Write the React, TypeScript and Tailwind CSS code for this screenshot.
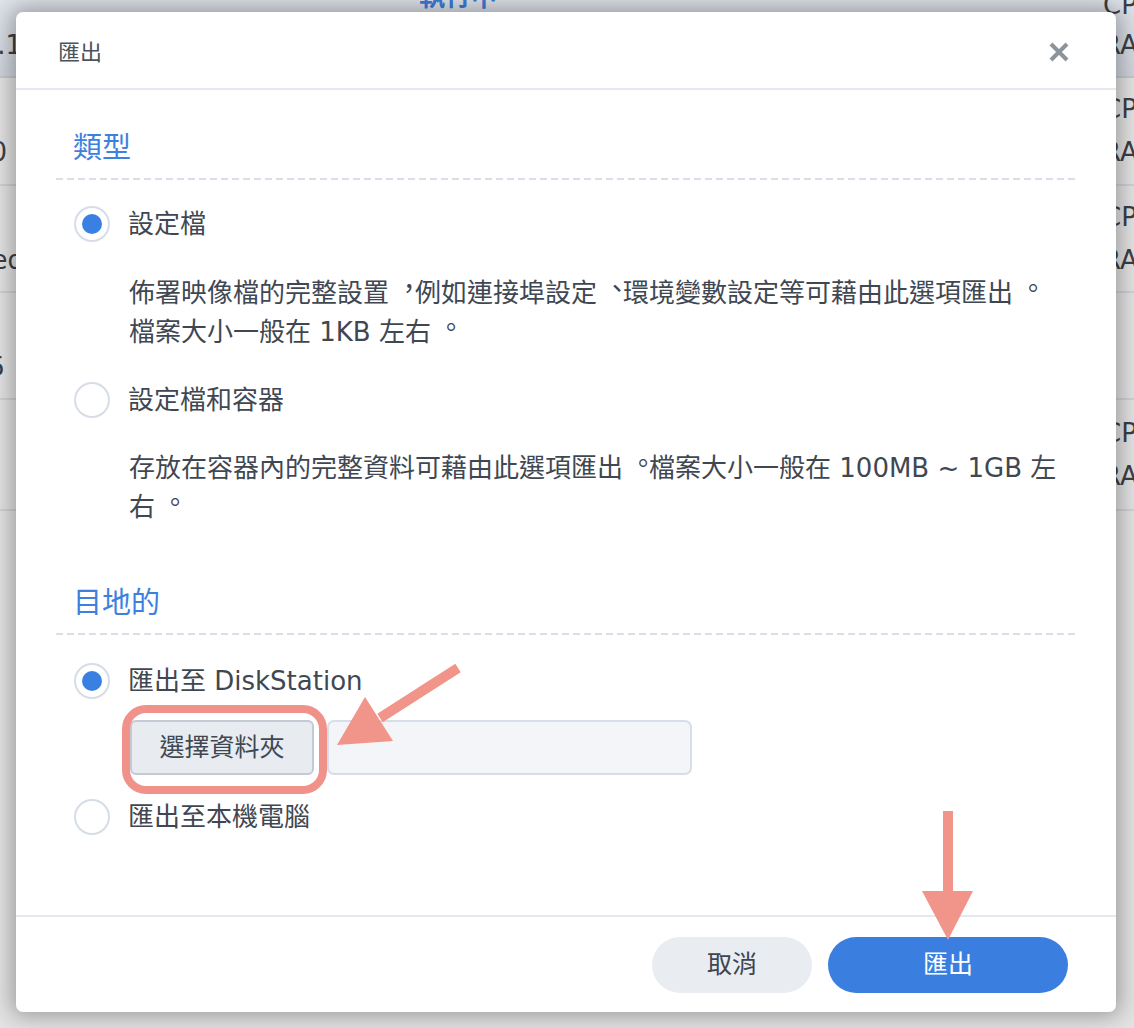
import React from "react";

function Radio({ checked }: { checked?: boolean }) {
  return (
    <div className="w-[36px] h-[36px] rounded-full border-2 border-[#d6dde7] bg-white flex items-center justify-center shrink-0">
      {checked && <div className="w-[20px] h-[20px] rounded-full bg-[#3a80e2]" />}
    </div>
  );
}

function Dashed() {
  return (
    <div className="h-[2px] bg-[linear-gradient(to_right,#d8dfe8_7px,transparent_7px)] bg-[length:11px_2px] bg-repeat-x" />
  );
}

function P({ c }: { c: string }) {
  return <span className="inline-block translate-x-[7px] -translate-y-[4px]">{c}</span>;
}

function BgRow({
  h,
  left,
  leftClass,
  right,
}: {
  h: string;
  left?: string;
  leftClass: string;
  right?: boolean;
}) {
  return (
    <div className={h}>
      <div className="flex h-full items-center justify-between">
        <div className={leftClass}>
          <span>&nbsp;</span>
          <span>{left ?? "\u00a0"}</span>
        </div>
        <div className="w-[31px] flex flex-col overflow-hidden text-[26px] leading-[43px] text-[#3a3f45] whitespace-nowrap">
          <span>{right ? "CPU" : "\u00a0"}</span>
          <span>{right ? "RAM" : "\u00a0"}</span>
        </div>
      </div>
    </div>
  );
}

export default function App() {
  return (
    <div
      lang="zh-TW"
      className="relative w-[1134px] h-[1028px] overflow-hidden bg-[#e3e3e3] font-['DejaVu_Sans','Noto_Sans_CJK_TC',sans-serif]"
    >
      {/* background page */}
      <div className="flex flex-col">
        <div className="h-[78px] bg-[linear-gradient(to_bottom,#dfe3ea,#cfd4dc)] border-b-2 border-[#c4c9d0] flex justify-between overflow-hidden">
          <div className="flex flex-col items-end w-[30px] -ml-[8px] -mt-[15px] text-[26px] leading-[40px] text-[#3a3f45] overflow-hidden whitespace-nowrap">
            <span>&nbsp;</span>
            <span>1.1</span>
          </div>
          <div className="-mt-[23px] ml-[397px] text-[26px] leading-[40px] font-bold text-[#3d7bd9] whitespace-nowrap">
            執行中
          </div>
          <div className="ml-auto w-[31px] flex flex-col -mt-[15px] text-[26px] leading-[40px] text-[#3a3f45] overflow-hidden whitespace-nowrap">
            <span>CPU</span>
            <span>RAM</span>
          </div>
        </div>
        <div className="border-b-2 border-[#cfd2d6]">
          <BgRow
            h="h-[106px]"
            left="10"
            leftClass="w-[30px] flex flex-col items-end overflow-hidden -ml-[23px] text-[26px] leading-[43px] text-[#3a3f45] whitespace-nowrap"
            right
          />
        </div>
        <div className="border-b-2 border-[#cfd2d6]">
          <BgRow
            h="h-[105px]"
            left="ed"
            leftClass="w-[30px] flex flex-col items-end overflow-hidden -ml-[6px] text-[26px] leading-[43px] text-[#3a3f45] whitespace-nowrap"
            right
          />
        </div>
        <div className="border-b-2 border-[#cfd2d6]">
          <BgRow
            h="h-[105px]"
            left="35"
            leftClass="w-[30px] flex flex-col items-end overflow-hidden -ml-[25px] text-[26px] leading-[43px] text-[#3a3f45] whitespace-nowrap"
          />
        </div>
        <div className="border-b-2 border-[#cfd2d6]">
          <BgRow
            h="h-[109px]"
            leftClass="w-[30px] flex flex-col items-end overflow-hidden -ml-[14px] text-[26px] leading-[43px] text-[#3a3f45] whitespace-nowrap"
            right
          />
        </div>
      </div>

      {/* dialog */}
      <div className="absolute left-[16px] top-[12px] w-[1100px] h-[1000px] bg-white rounded-[7px] shadow-[0_0_22px_4px_rgba(0,0,0,0.32)] flex flex-col">
        <div className="h-[78px] shrink-0 border-b-2 border-[#e4e9f0] flex items-center justify-between pl-[42px] pr-[46px] pt-[4px]">
          <div className="text-[22px] text-[#4a535d]">匯出</div>
          <svg width="22" height="22" viewBox="0 0 22 22">
            <path d="M3 3 L19 19 M19 3 L3 19" stroke="#8d939a" strokeWidth="4" strokeLinecap="butt" />
          </svg>
        </div>

        <div className="flex-1 px-[40px] text-[#3f4852]">
          <div className="mt-[36px] h-[44px] leading-[44px] pl-[17px] text-[29px] text-[#3d80de]">類型</div>
          <div className="mt-[8px]">
            <Dashed />
          </div>

          <div className="mt-[22px] h-[44px] flex items-center pl-[18px] gap-[18px]">
            <Radio checked />
            <span className="text-[26px]">設定檔</span>
          </div>
          <div className="mt-[28px] pl-[73px] text-[26px] leading-[39px]">
            佈署映像檔的完整設置<P c="，" />例如連接埠設定<P c="、" />環境變數設定等可藉由此選項匯出<P c="。" />
            <br />
            檔案大小一般在 1KB 左右<P c="。" />
          </div>

          <div className="mt-[26px] h-[44px] flex items-center pl-[18px] gap-[18px]">
            <Radio />
            <span className="text-[26px]">設定檔和容器</span>
          </div>
          <div className="mt-[27px] pl-[73px] text-[26px] leading-[39px]">
            存放在容器內的完整資料可藉由此選項匯出<P c="。" />檔案大小一般在 100MB ~ 1GB 左右<P c="。" />
          </div>

          <div className="mt-[54px] h-[44px] leading-[44px] pl-[17px] text-[29px] text-[#3d80de]">目地的</div>
          <div className="mt-[8px]">
            <Dashed />
          </div>

          <div className="mt-[24px] h-[44px] flex items-center pl-[18px] gap-[18px]">
            <Radio checked />
            <span className="text-[26px]">匯出至 DiskStation</span>
          </div>
          <div className="mt-[17px] h-[55px] flex pl-[74px] gap-[13px]">
            <div className="w-[184px] h-full rounded-[6px] border-2 border-[#c3cad3] bg-[#e8ecf1] flex items-center justify-center text-[25px] text-[#3f4852]">
              選擇資料夾
            </div>
            <div className="w-[365px] h-full rounded-[7px] border-2 border-[#d7dee8] bg-[#f3f5f9]" />
          </div>
          <div className="mt-[20px] h-[44px] flex items-center pl-[18px] gap-[18px]">
            <Radio />
            <span className="text-[26px]">匯出至本機電腦</span>
          </div>
        </div>

        <div className="h-[97px] shrink-0 border-t-2 border-[#e4e9f0] flex items-center justify-end pr-[48px] gap-[16px]">
          <div className="w-[160px] h-[56px] rounded-full bg-[#e9edf2] flex items-center justify-center text-[25px] text-[#3d4650]">
            取消
          </div>
          <div className="w-[240px] h-[56px] rounded-full bg-[#3a7fe0] flex items-center justify-center text-[25px] text-white">
            匯出
          </div>
        </div>
      </div>

      {/* annotations */}
      <svg className="absolute inset-0 pointer-events-none" width="1134" height="1028" viewBox="0 0 1134 1028">
        <rect x="126" y="709" width="197" height="81" rx="20" ry="20" fill="none" stroke="#f0928a" strokeWidth="8" />
        <line x1="458" y1="668" x2="380" y2="718" stroke="#f1948a" strokeWidth="10" />
        <polygon points="337,745 365,697 393,741" fill="#f1948a" />
        <rect x="943" y="811" width="10" height="84" fill="#f1948a" />
        <polygon points="922,891 973,891 948,940" fill="#f1948a" />
      </svg>
    </div>
  );
}
